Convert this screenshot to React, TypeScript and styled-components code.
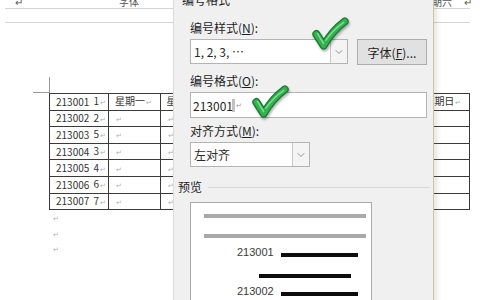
import styled, { createGlobalStyle } from "styled-components";
import { ChevronDown } from "lucide-react";

const GlobalStyle = createGlobalStyle`
  html, body {
    margin: 0;
    padding: 0;
  }
  body {
    width: 480px;
    height: 300px;
    overflow: hidden;
    background: #ffffff;
    font-family: "Noto Sans CJK SC", "Noto Sans", sans-serif;
  }
`;

const Stage = styled.div`
  position: relative;
  width: 480px;
  height: 300px;
  overflow: hidden;
  background: #ffffff;
`;

/* ---------- document behind the dialog ---------- */

const Document = styled.div`
  width: 465px;
  margin-left: 5px;
  color: #333;
  font-size: 10px;
`;

const TopStrip = styled.div`
  display: flex;
  align-items: flex-end;
  height: 8px;
  border-bottom: 1px solid #d4d4d4;
`;

const StripText = styled.span<{ $ml: number }>`
  margin-left: ${(p) => p.$ml}px;
  line-height: 12px;
  font-size: 10px;
  color: #555;
  white-space: nowrap;
`;

const SecondStrip = styled.div`
  height: 13px;
  border-bottom: 1px solid #d4d4d4;
`;

const CornerMark = styled.div`
  width: 16px;
  height: 15px;
  margin: 54px 0 0 28px;
  border-right: 1px solid #9a9a9a;
  border-bottom: 1px solid #9a9a9a;
`;

const WeekTable = styled.table`
  margin-left: 44px;
  width: 421px;
  border-collapse: collapse;
  table-layout: fixed;
`;

const Cell = styled.td`
  height: 15.6px;
  padding: 0 2px 0 6px;
  border: 1px solid #3a3a3a;
  font-size: 10px;
  line-height: 14px;
  color: #333;
  white-space: nowrap;
  overflow: hidden;
`;

const NumCell = styled.span`
  display: flex;
  align-items: center;
  justify-content: space-between;
`;

const Mark = styled.span`
  font-size: 7px;
  color: #b0b0b0;
  margin-left: 1px;
`;

const ParaMarks = styled.div`
  margin: 1px 0 0 48px;
  display: flex;
  flex-direction: column;
  line-height: 15.5px;
  font-size: 7px;
  color: #b0b0b0;
`;

/* ---------- dialog ---------- */

const Dialog = styled.div`
  position: absolute;
  left: 173px;
  top: -4px;
  width: 259px;
  height: 320px;
  background: #f0f0f0;
  border-left: 1px solid #dcdcdc;
  border-right: 1px solid #c9c5ae;
  box-shadow: 3px 0 5px rgba(120, 110, 60, 0.18);
  color: #1e1e1e;
  font-size: 12px;
`;

const GroupCaption = styled.div<{ $ml: number; $mt: number }>`
  display: flex;
  align-items: center;
  gap: 6px;
  margin: ${(p) => p.$mt}px 0 0 ${(p) => p.$ml}px;
  line-height: 14px;
  font-size: 12px;
`;

const CaptionLine = styled.div`
  flex: 1;
  height: 1px;
  margin-right: 3px;
  background: #d8d8d8;
`;

const Group = styled.div`
  display: flex;
  flex-direction: column;
  padding: 0 5px 0 16px;
`;

const FieldLabel = styled.div<{ $mt: number }>`
  margin-top: ${(p) => p.$mt}px;
  line-height: 14px;
  font-size: 12px;
`;

const FieldRow = styled.div`
  display: flex;
  gap: 9px;
  margin-top: 4px;
`;

const ComboBox = styled.div<{ $width: number; $mt: number }>`
  display: flex;
  width: ${(p) => p.$width}px;
  height: 25px;
  margin-top: ${(p) => p.$mt}px;
  box-sizing: border-box;
  background: #ffffff;
  border: 1px solid #b4b4b4;
`;

const ComboValue = styled.div`
  flex: 1;
  display: flex;
  align-items: center;
  padding-left: 3px;
  font-size: 12px;
  color: #2a2a2a;
`;

const ComboArrow = styled.div`
  width: 16px;
  display: flex;
  align-items: center;
  justify-content: center;
  border-left: 1px solid #c8c8c8;
  background: #f4f4f4;
  color: #6a6a6a;
`;

const FontButton = styled.div`
  width: 70px;
  height: 26px;
  box-sizing: border-box;
  display: flex;
  align-items: center;
  justify-content: center;
  background: #e1e1e1;
  border: 1px solid #adadad;
  font-size: 12px;
`;

const TextInput = styled.div`
  display: flex;
  align-items: center;
  width: 237px;
  height: 26px;
  margin-top: 4px;
  padding-left: 2px;
  box-sizing: border-box;
  background: #ffffff;
  border: 1px solid #b4b4b4;
  font-size: 12px;
`;

const Caret = styled.span`
  width: 3px;
  height: 13px;
  margin: 0 1px 0 -1px;
  background: rgba(120, 120, 120, 0.45);
`;

const InputMark = styled.span`
  font-size: 7px;
  color: #999;
`;

const PreviewBox = styled.div`
  width: 182px;
  height: 120px;
  margin: 8px 0 0 16px;
  padding-top: 11px;
  box-sizing: border-box;
  background: #ffffff;
  border: 1px solid #a9a9a9;
  display: flex;
  flex-direction: column;
`;

const Bar = styled.div<{ $ml: number; $w: number; $mt: number; $dark?: boolean }>`
  width: ${(p) => p.$w}px;
  height: 4px;
  margin-left: ${(p) => p.$ml}px;
  margin-top: ${(p) => p.$mt}px;
  background: ${(p) => (p.$dark ? "#0d0d0d" : "#a9a9a9")};
`;

const ItemRow = styled.div<{ $mt: number }>`
  display: flex;
  align-items: center;
  margin: ${(p) => p.$mt}px 0 0 46px;
  height: 14px;
`;

const ItemNumber = styled.span`
  font-family: "Liberation Sans", Arial, sans-serif;
  font-size: 11px;
  color: #3a3a3a;
  width: 44px;
`;

const CheckWrap = styled.div<{ $left: number; $top: number }>`
  position: absolute;
  left: ${(p) => p.$left}px;
  top: ${(p) => p.$top}px;
  width: 38px;
  height: 34px;
  filter: drop-shadow(1px 2px 1px rgba(0, 0, 0, 0.3));
`;

const GreenCheck = ({ left, top }: { left: number; top: number }) => (
  <CheckWrap $left={left} $top={top}>
    <svg width="38" height="34" viewBox="0 0 36 32" fill="none">
      <path
        d="M5 16 L12 27 Q20 13 32 4"
        stroke="#177a33"
        strokeWidth="7.5"
        strokeLinecap="round"
        strokeLinejoin="round"
      />
      <path
        d="M5 16 L12 27 Q20 13 32 4"
        stroke="#35b04e"
        strokeWidth="5"
        strokeLinecap="round"
        strokeLinejoin="round"
      />
      <path
        d="M6 15.5 L12 25 M14 22 Q21 12 31 5"
        stroke="#7fdc8f"
        strokeWidth="1.4"
        strokeLinecap="round"
      />
    </svg>
  </CheckWrap>
);

const rows = [
  { id: "213001", n: "1" },
  { id: "213002", n: "2" },
  { id: "213003", n: "5" },
  { id: "213004", n: "3" },
  { id: "213005", n: "4" },
  { id: "213006", n: "6" },
  { id: "213007", n: "7" },
];

const days = ["星期一", "星期二", "星期三", "星期四", "星期五", "星期六", "星期日"];

export default function App() {
  return (
    <>
      <GlobalStyle />
      <Stage>
        <Document>
          <TopStrip>
            <StripText $ml={10}>↵</StripText>
            <StripText $ml={96}>字体</StripText>
            <StripText $ml={283}>星期六</StripText>
            <StripText $ml={12}>↵</StripText>
          </TopStrip>
          <SecondStrip />
          <CornerMark />
          <WeekTable>
            <colgroup>
              <col style={{ width: 59 }} />
              {days.map((d) => (
                <col key={d} />
              ))}
            </colgroup>
            <tbody>
              {rows.map((r, i) => (
                <tr key={r.id}>
                  <Cell>
                    <NumCell>
                      <span>{r.id}</span>
                      <span>
                        {r.n}
                        <Mark>↵</Mark>
                      </span>
                    </NumCell>
                  </Cell>
                  {days.map((d) => (
                    <Cell key={d}>
                      {i === 0 ? d : ""}
                      <Mark>↵</Mark>
                    </Cell>
                  ))}
                </tr>
              ))}
            </tbody>
          </WeekTable>
          <ParaMarks>
            <span>↵</span>
            <span>↵</span>
            <span>↵</span>
          </ParaMarks>
        </Document>

        <Dialog>
          <GroupCaption $ml={8} $mt={-3}>
            编号格式
          </GroupCaption>
          <Group>
            <FieldLabel $mt={14}>
              编号样式(<u>N</u>):
            </FieldLabel>
            <FieldRow>
              <ComboBox $width={158} $mt={0}>
                <ComboValue>1, 2, 3, …</ComboValue>
                <ComboArrow>
                  <ChevronDown size={12} strokeWidth={1.4} />
                </ComboArrow>
              </ComboBox>
              <FontButton>
                字体(<u>F</u>)...
              </FontButton>
            </FieldRow>
            <FieldLabel $mt={9}>
              编号格式(<u>O</u>):
            </FieldLabel>
            <TextInput>
              213001
              <Caret />
              <InputMark>↵</InputMark>
            </TextInput>
            <FieldLabel $mt={6}>
              对齐方式(<u>M</u>):
            </FieldLabel>
            <ComboBox $width={120} $mt={4}>
              <ComboValue>左对齐</ComboValue>
              <ComboArrow>
                <ChevronDown size={12} strokeWidth={1.4} />
              </ComboArrow>
            </ComboBox>
          </Group>
          <GroupCaption $ml={4} $mt={13}>
            预览
            <CaptionLine />
          </GroupCaption>
          <PreviewBox>
            <Bar $ml={13} $w={162} $mt={0} />
            <Bar $ml={13} $w={162} $mt={16} />
            <ItemRow $mt={7}>
              <ItemNumber>213001</ItemNumber>
              <Bar $ml={0} $w={77} $mt={6} $dark />
            </ItemRow>
            <Bar $ml={68} $w={92} $mt={15} $dark />
            <ItemRow $mt={6}>
              <ItemNumber>213002</ItemNumber>
              <Bar $ml={0} $w={77} $mt={6} $dark />
            </ItemRow>
          </PreviewBox>
        </Dialog>

        <GreenCheck left={311} top={17} />
        <GreenCheck left={251} top={85} />
      </Stage>
    </>
  );
}
